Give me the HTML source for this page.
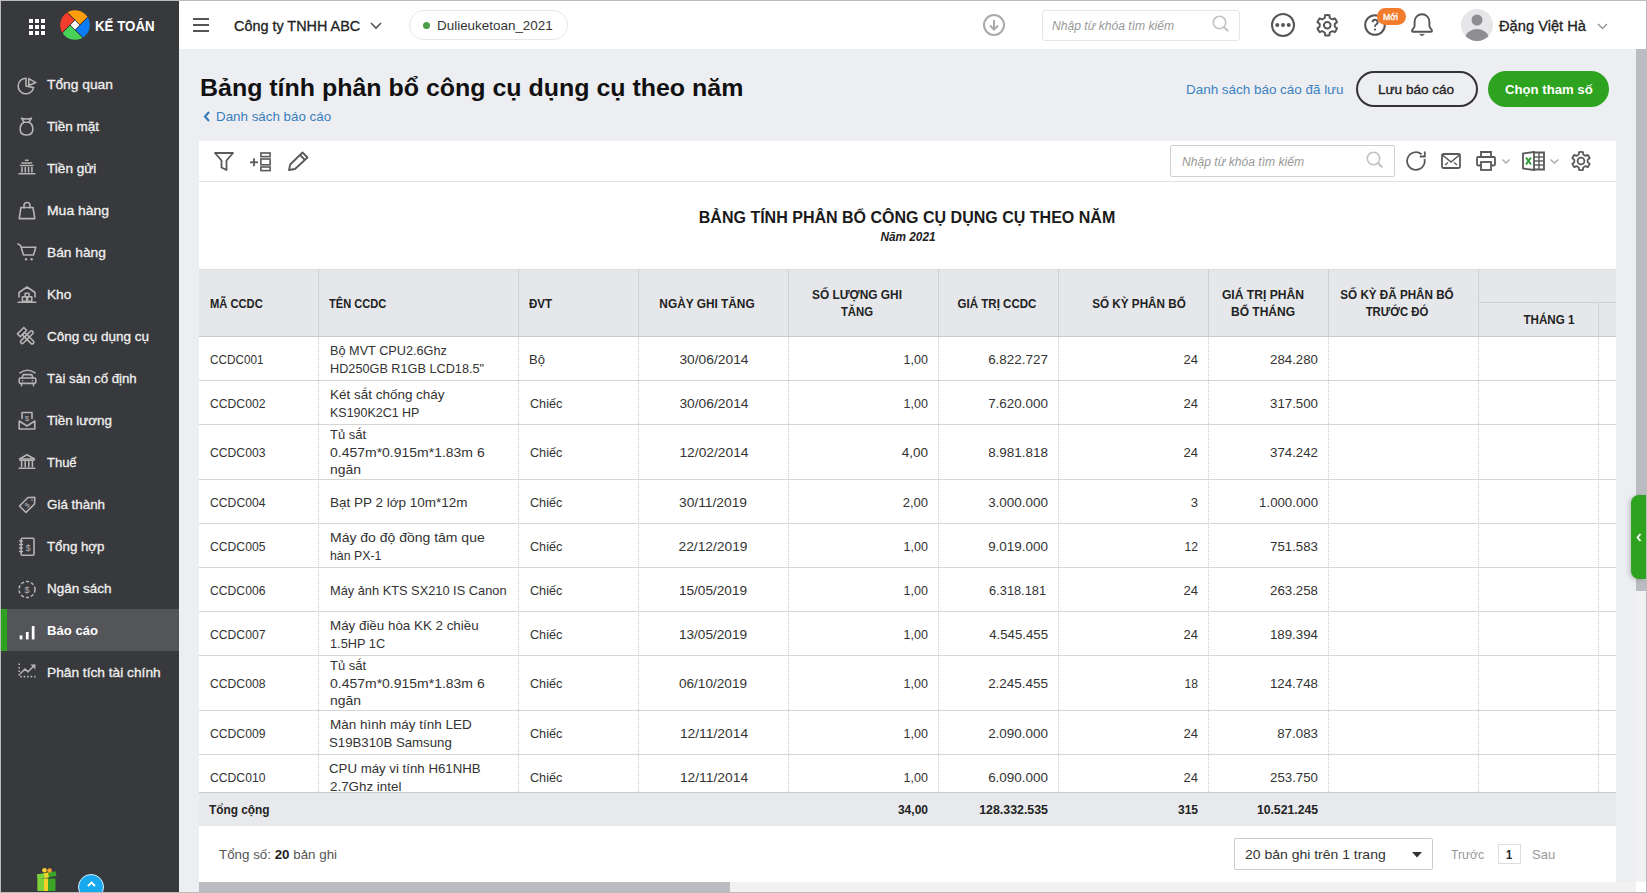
<!DOCTYPE html>
<html><head><meta charset="utf-8"><style>
*{box-sizing:border-box;margin:0;padding:0}
html,body{width:1647px;height:893px;overflow:hidden}
body{position:relative;background:#edeef1;font-family:"Liberation Sans",sans-serif;color:#222}
.a{position:absolute;white-space:nowrap;line-height:1}
.n{position:absolute}
svg{position:absolute;overflow:visible}
</style></head><body>
<div class="n" style="left:1px;top:1px;width:178px;height:891px;background:#38393c"></div>
<div class="n" style="left:29px;top:19px;width:4px;height:4px;background:#fff"></div>
<div class="n" style="left:35px;top:19px;width:4px;height:4px;background:#fff"></div>
<div class="n" style="left:41px;top:19px;width:4px;height:4px;background:#fff"></div>
<div class="n" style="left:29px;top:25px;width:4px;height:4px;background:#fff"></div>
<div class="n" style="left:35px;top:25px;width:4px;height:4px;background:#fff"></div>
<div class="n" style="left:41px;top:25px;width:4px;height:4px;background:#fff"></div>
<div class="n" style="left:29px;top:31px;width:4px;height:4px;background:#fff"></div>
<div class="n" style="left:35px;top:31px;width:4px;height:4px;background:#fff"></div>
<div class="n" style="left:41px;top:31px;width:4px;height:4px;background:#fff"></div>
<svg style="left:59.9px;top:10px" width="30" height="30" viewBox="0 0 30 30">
<defs><clipPath id="lc"><circle cx="15" cy="15" r="14.8"/></clipPath></defs>
<g clip-path="url(#lc)" stroke="#2e2f31" stroke-width="0.9">
<polygon points="-15.00,-19.90 15.00,10.10 19.90,15.00 49.90,-15.00" fill="#ff9d0b"/>
<polygon points="19.90,15.00 49.90,-15.00 45.00,49.90 15.00,19.90" fill="#0b7cf4"/>
<polygon points="15.00,19.90 45.00,49.90 -19.90,45.00 10.10,15.00" fill="#48d258"/>
<polygon points="10.10,15.00 -19.90,45.00 -15.00,-19.90 15.00,10.10" fill="#f23c2c"/>
</g>
<polygon points="15.00,10.10 19.90,15.00 15.00,19.90 10.10,15.00" fill="#fff" stroke="#2e2f31" stroke-width="0.8"/>
</svg>
<div class="a" id="t1" style="left:94.60px;top:19.15px;font-size:14.00px;color:#fff;font-weight:700;font-style:normal;transform:scaleX(0.9500);transform-origin:0 0;">KẾ TOÁN</div>
<div class="a" id="t2" style="left:47.00px;top:78.00px;font-size:13.00px;color:#efefef;font-weight:400;font-style:normal;-webkit-text-stroke:0.3px currentColor;transform:scaleX(1.0607);transform-origin:0 0;">Tổng quan</div>
<svg style="left:17px;top:74px" width="20" height="20"><path d="M9,12 L9,4.2 A7.8,7.8 0 1,0 16.6,13.6 Z" fill="none" stroke="#b4b4b4" stroke-width="1.6" stroke-linejoin="round" stroke-linecap="round"/><path d="M11.8,4.6 L11.8,11.6 L18.8,8.6 Z" fill="none" stroke="#b4b4b4" stroke-width="1.6" stroke-linejoin="round" stroke-linecap="round"/></svg>
<div class="a" id="t3" style="left:47.00px;top:120.00px;font-size:13.00px;color:#efefef;font-weight:400;font-style:normal;-webkit-text-stroke:0.3px currentColor;transform:scaleX(1.0377);transform-origin:0 0;">Tiền mặt</div>
<svg style="left:17px;top:116px" width="20" height="20"><path d="M4.5,2.2 C6.5,3.2 12.5,3.2 14.5,2.2 L12,6.2 L7,6.2 Z" fill="none" stroke="#b4b4b4" stroke-width="1.6" stroke-linejoin="round" stroke-linecap="round"/><path d="M7,6.2 C1.5,9.5 1.5,19 9.5,19 C17.5,19 17.5,9.5 12,6.2" fill="none" stroke="#b4b4b4" stroke-width="1.6" stroke-linejoin="round" stroke-linecap="round"/></svg>
<div class="a" id="t4" style="left:47.00px;top:162.00px;font-size:13.00px;color:#efefef;font-weight:400;font-style:normal;-webkit-text-stroke:0.3px currentColor;transform:scaleX(1.0455);transform-origin:0 0;">Tiền gửi</div>
<svg style="left:17px;top:158px" width="20" height="20"><path d="M8.5,2.2 H11" fill="none" stroke="#b4b4b4" stroke-width="1.6" stroke-linejoin="round" stroke-linecap="round"/><path d="M5,5 H14.5" fill="none" stroke="#b4b4b4" stroke-width="1.6" stroke-linejoin="round" stroke-linecap="round"/><path d="M3.5,7.5 H16" fill="none" stroke="#b4b4b4" stroke-width="1.6" stroke-linejoin="round" stroke-linecap="round"/><path d="M5,9.5 V14 M8.3,9.5 V14 M11.6,9.5 V14 M14.9,9.5 V14" fill="none" stroke="#b4b4b4" stroke-width="1.6" stroke-linejoin="round" stroke-linecap="round"/><path d="M2,15.8 H17.8" fill="none" stroke="#b4b4b4" stroke-width="1.6" stroke-linejoin="round" stroke-linecap="round"/></svg>
<div class="a" id="t5" style="left:47.00px;top:204.00px;font-size:13.00px;color:#efefef;font-weight:400;font-style:normal;-webkit-text-stroke:0.3px currentColor;transform:scaleX(1.0729);transform-origin:0 0;">Mua hàng</div>
<svg style="left:17px;top:200px" width="20" height="20"><path d="M7,8 V5.5 A3,3 0 0,1 13,5.5 V8" fill="none" stroke="#b4b4b4" stroke-width="1.6" stroke-linejoin="round" stroke-linecap="round"/><path d="M4,7.5 H16 L17.8,18.6 H2.2 Z" fill="none" stroke="#b4b4b4" stroke-width="1.6" stroke-linejoin="round" stroke-linecap="round"/></svg>
<div class="a" id="t6" style="left:47.00px;top:246.00px;font-size:13.00px;color:#efefef;font-weight:400;font-style:normal;-webkit-text-stroke:0.3px currentColor;transform:scaleX(1.0565);transform-origin:0 0;">Bán hàng</div>
<svg style="left:17px;top:242px" width="20" height="20"><path d="M1,1.8 L3.6,3.6 L6.5,13 H16.5 L18.8,5.2 H4.4" fill="none" stroke="#b4b4b4" stroke-width="1.6" stroke-linejoin="round" stroke-linecap="round"/><circle cx="9" cy="17.3" r="1.2" fill="#b4b4b4"/><circle cx="14.6" cy="17.3" r="1.2" fill="#b4b4b4"/></svg>
<div class="a" id="t7" style="left:47.00px;top:288.00px;font-size:13.00px;color:#efefef;font-weight:400;font-style:normal;-webkit-text-stroke:0.3px currentColor;transform:scaleX(1.0511);transform-origin:0 0;">Kho</div>
<svg style="left:17px;top:284px" width="20" height="20"><path d="M2,13 V8.5 L10,3 L18,8.5 V13" fill="none" stroke="#b4b4b4" stroke-width="1.6" stroke-linejoin="round" stroke-linecap="round"/><rect x="8.2" y="9.2" width="3.8" height="3.6" fill="none" stroke="#b4b4b4" stroke-width="1.6" stroke-linejoin="round" stroke-linecap="round"/><rect x="5.4" y="12.8" width="4.2" height="4.5" fill="none" stroke="#b4b4b4" stroke-width="1.6" stroke-linejoin="round" stroke-linecap="round"/><rect x="10.6" y="12.8" width="4.2" height="4.5" fill="none" stroke="#b4b4b4" stroke-width="1.6" stroke-linejoin="round" stroke-linecap="round"/><path d="M1.2,18.3 H18.8" fill="none" stroke="#b4b4b4" stroke-width="1.6" stroke-linejoin="round" stroke-linecap="round"/></svg>
<div class="a" id="t8" style="left:47.00px;top:330.00px;font-size:13.00px;color:#efefef;font-weight:400;font-style:normal;-webkit-text-stroke:0.3px currentColor;transform:scaleX(1.0390);transform-origin:0 0;">Công cụ dụng cụ</div>
<svg style="left:17px;top:326px" width="20" height="20"><g transform="rotate(-45 10 11)"><rect x="8.3" y="6" width="3.4" height="14" rx="1.7" fill="none" stroke="#b4b4b4" stroke-width="1.6" stroke-linejoin="round" stroke-linecap="round"/><path d="M5.5,2 H14.5 V6 H5.5 Z" fill="none" stroke="#b4b4b4" stroke-width="1.6" stroke-linejoin="round" stroke-linecap="round"/></g><g transform="rotate(45 10 11)"><rect x="8.3" y="3" width="3.4" height="16.5" rx="1.7" fill="none" stroke="#b4b4b4" stroke-width="1.6" stroke-linejoin="round" stroke-linecap="round"/></g></svg>
<div class="a" id="t9" style="left:47.00px;top:372.00px;font-size:13.00px;color:#efefef;font-weight:400;font-style:normal;-webkit-text-stroke:0.3px currentColor;transform:scaleX(1.0171);transform-origin:0 0;">Tài sản cố định</div>
<svg style="left:17px;top:368px" width="20" height="20"><path d="M3,4.8 Q10.5,-0.2 18,4.8" fill="none" stroke="#b4b4b4" stroke-width="1.6" stroke-linejoin="round" stroke-linecap="round"/><path d="M5,10 L6.3,6.6 H14.7 L16,10" fill="none" stroke="#b4b4b4" stroke-width="1.6" stroke-linejoin="round" stroke-linecap="round"/><rect x="2.2" y="10" width="16.6" height="5.4" rx="1.3" fill="none" stroke="#b4b4b4" stroke-width="1.6" stroke-linejoin="round" stroke-linecap="round"/><path d="M4.5,15.4 V17.8 M16.5,15.4 V17.8" fill="none" stroke="#b4b4b4" stroke-width="1.6" stroke-linejoin="round" stroke-linecap="round"/><circle cx="5.6" cy="12.7" r="0.8" fill="#b4b4b4"/><circle cx="15.4" cy="12.7" r="0.8" fill="#b4b4b4"/></svg>
<div class="a" id="t10" style="left:47.00px;top:414.00px;font-size:13.00px;color:#efefef;font-weight:400;font-style:normal;-webkit-text-stroke:0.3px currentColor;transform:scaleX(1.0312);transform-origin:0 0;">Tiền lương</div>
<svg style="left:17px;top:410px" width="20" height="20"><path d="M5,8.5 V2.5 H15 V8.5" fill="none" stroke="#b4b4b4" stroke-width="1.6" stroke-linejoin="round" stroke-linecap="round"/><path d="M2.2,11 L10,16 L17.8,11 V19 H2.2 Z" fill="none" stroke="#b4b4b4" stroke-width="1.6" stroke-linejoin="round" stroke-linecap="round"/><text x="10" y="10.5" font-size="8" text-anchor="middle" fill="#b4b4b4" font-family="Liberation Sans">$</text></svg>
<div class="a" id="t11" style="left:47.00px;top:456.00px;font-size:13.00px;color:#efefef;font-weight:400;font-style:normal;-webkit-text-stroke:0.3px currentColor;transform:scaleX(0.9972);transform-origin:0 0;">Thuế</div>
<svg style="left:17px;top:452px" width="20" height="20"><path d="M2.5,7 L10,2.8 L17.5,7 Z" fill="none" stroke="#b4b4b4" stroke-width="1.6" stroke-linejoin="round" stroke-linecap="round"/><path d="M3,8.3 H17" fill="none" stroke="#b4b4b4" stroke-width="1.6" stroke-linejoin="round" stroke-linecap="round"/><path d="M4.6,9.5 V14.6 M8.2,9.5 V14.6 M11.8,9.5 V14.6 M15.4,9.5 V14.6" fill="none" stroke="#b4b4b4" stroke-width="1.6" stroke-linejoin="round" stroke-linecap="round"/><path d="M2.2,16.3 H17.8" fill="none" stroke="#b4b4b4" stroke-width="1.6" stroke-linejoin="round" stroke-linecap="round"/></svg>
<div class="a" id="t12" style="left:47.00px;top:498.00px;font-size:13.00px;color:#efefef;font-weight:400;font-style:normal;-webkit-text-stroke:0.3px currentColor;transform:scaleX(1.0295);transform-origin:0 0;">Giá thành</div>
<svg style="left:17px;top:494px" width="20" height="20"><path d="M2.5,12 L11,3.5 L17.8,3.2 L17.5,10 L9,18.5 Z" fill="none" stroke="#b4b4b4" stroke-width="1.6" stroke-linejoin="round" stroke-linecap="round"/><circle cx="15" cy="6" r="0.8" fill="#b4b4b4"/><text x="10" y="13.6" font-size="7" text-anchor="middle" fill="#b4b4b4" font-family="Liberation Sans" transform="rotate(-45 10 11)">$</text></svg>
<div class="a" id="t13" style="left:47.00px;top:540.00px;font-size:13.00px;color:#efefef;font-weight:400;font-style:normal;-webkit-text-stroke:0.3px currentColor;transform:scaleX(1.0216);transform-origin:0 0;">Tổng hợp</div>
<svg style="left:17px;top:536px" width="20" height="20"><rect x="4.2" y="2.2" width="12.8" height="17" rx="1" fill="none" stroke="#b4b4b4" stroke-width="1.6" stroke-linejoin="round" stroke-linecap="round"/><path d="M2.6,5 H5.4 M2.6,8.5 H5.4 M2.6,12 H5.4 M2.6,15.5 H5.4" fill="none" stroke="#b4b4b4" stroke-width="1.6" stroke-linejoin="round" stroke-linecap="round"/><text x="11" y="14.5" font-size="8.5" text-anchor="middle" fill="#b4b4b4" font-family="Liberation Sans">$</text></svg>
<div class="a" id="t14" style="left:47.00px;top:582.00px;font-size:13.00px;color:#efefef;font-weight:400;font-style:normal;-webkit-text-stroke:0.3px currentColor;transform:scaleX(1.0374);transform-origin:0 0;">Ngân sách</div>
<svg style="left:17px;top:578px" width="20" height="20"><circle cx="10" cy="11.5" r="8" fill="none" stroke="#b4b4b4" stroke-width="1.5" stroke-dasharray="3.2 2"/><text x="10" y="14.8" font-size="9" text-anchor="middle" fill="#b4b4b4" font-family="Liberation Sans">$</text></svg>
<div class="n" style="left:1px;top:609px;width:178px;height:42px;background:#545558"></div>
<div class="n" style="left:1px;top:609px;width:6px;height:42px;background:#2ea31f"></div>
<div class="a" id="t15" style="left:47.00px;top:624.00px;font-size:13.00px;color:#fff;font-weight:700;font-style:normal;transform:scaleX(1.0082);transform-origin:0 0;">Báo cáo</div>
<svg style="left:17px;top:620px" width="20" height="20"><rect x="2.7" y="15.4" width="2.7" height="4" fill="#fff"/><rect x="8.9" y="12" width="2.7" height="7.4" fill="#fff"/><rect x="14.8" y="6" width="2.7" height="13.4" fill="#fff"/></svg>
<div class="a" id="t16" style="left:47.00px;top:666.00px;font-size:13.00px;color:#efefef;font-weight:400;font-style:normal;-webkit-text-stroke:0.3px currentColor;transform:scaleX(1.0556);transform-origin:0 0;">Phân tích tài chính</div>
<svg style="left:17px;top:662px" width="20" height="20"><path d="M2.2,1.5 V14.6 H18.6" fill="none" stroke="#b4b4b4" stroke-width="1.6" stroke-dasharray="1.6 1.9"/><path d="M3.5,11.5 L8,7 L11,9.8 L17.5,3.3" fill="none" stroke="#b4b4b4" stroke-width="1.6" stroke-linejoin="round" stroke-linecap="round" stroke-width="1.6"/><path d="M13.5,2.5 H18.4 V7.4 Z" fill="#b4b4b4"/></svg>
<svg style="left:36px;top:866px" width="24" height="26">
<path d="M1.5,12.5 H19.5 V25 H1.5 Z" fill="#3aa528"/>
<path d="M1.5,12.5 H8.5 V25 H1.5 Z" fill="#7ed13a"/>
<rect x="8" y="12.5" width="4" height="12.5" fill="#f4d22a"/>
<path d="M0.8,8.5 L19.5,5.2 L20.5,10 L1.8,13.2 Z" fill="#3aa528"/>
<path d="M0.8,8.5 L10,6.9 L11,11.6 L1.8,13.2 Z" fill="#7ed13a"/>
<path d="M8,7.2 L12,6.5 L13,11.2 L9,11.9 Z" fill="#f4d22a"/>
<circle cx="8.5" cy="4.2" r="2.3" fill="#f4d22a"/><circle cx="13.6" cy="4.6" r="2.3" fill="#f0a030"/>
</svg>
<div class="n" style="left:77.5px;top:874px;width:26px;height:26px;border-radius:50%;background:#17a8ee;border:1px solid #d8f0ff"></div>
<svg style="left:86.5px;top:881px" width="9" height="6"><polyline points="1,5 4.5,1.5 8,5" fill="none" stroke="#fff" stroke-width="1.8"/></svg>
<div class="n" style="left:179px;top:1px;width:1467px;height:48px;background:#fff"></div>
<div class="n" style="left:193px;top:18px;width:16px;height:2px;background:#555"></div>
<div class="n" style="left:193px;top:24px;width:16px;height:2px;background:#555"></div>
<div class="n" style="left:193px;top:30px;width:16px;height:2px;background:#555"></div>
<div class="a" id="t17" style="left:233.60px;top:19.15px;font-size:14.00px;color:#222;font-weight:400;font-style:normal;-webkit-text-stroke:0.3px currentColor;transform:scaleX(1.0283);transform-origin:0 0;">Công ty TNHH ABC</div>
<svg style="left:370px;top:22px" width="12" height="8"><polyline points="1,1 6,6 11,1" fill="none" stroke="#555" stroke-width="1.6"/></svg>
<div class="n" style="left:409px;top:10px;width:159px;height:30px;border:1px solid #e6e6e6;border-radius:15px;background:#fff"></div>
<div class="n" style="left:423px;top:22px;width:7px;height:7px;border-radius:50%;background:#4a9e4a"></div>
<div class="a" id="t18" style="left:437.20px;top:20.25px;font-size:12.70px;color:#333;font-weight:400;font-style:normal;transform:scaleX(1.0586);transform-origin:0 0;">Dulieuketoan_2021</div>
<svg style="left:983px;top:14px" width="22" height="22"><circle cx="11" cy="11" r="10" fill="none" stroke="#aaa" stroke-width="2"/><line x1="11" y1="6" x2="11" y2="15" stroke="#aaa" stroke-width="2"/><polyline points="7,11.5 11,15.5 15,11.5" fill="none" stroke="#aaa" stroke-width="2"/></svg>
<div class="n" style="left:1042px;top:10px;width:198px;height:31px;border:1px solid #e6e6e6;border-radius:3px"></div>
<div class="a" id="t19" style="left:1052.00px;top:19.84px;font-size:12.00px;color:#999;font-weight:400;font-style:italic;transform:scaleX(1.0091);transform-origin:0 0;">Nhập từ khóa tìm kiếm</div>
<svg style="left:1212px;top:15px" width="18" height="18"><circle cx="7.5" cy="7.5" r="6.2" fill="none" stroke="#c2c2c2" stroke-width="1.6"/><line x1="12.2" y1="12.2" x2="16.2" y2="16.2" stroke="#c2c2c2" stroke-width="2"/></svg>
<svg style="left:1271px;top:13px" width="24" height="24"><circle cx="12" cy="12" r="11" fill="none" stroke="#555" stroke-width="2"/><circle cx="6.3" cy="12" r="2" fill="#555"/><circle cx="12" cy="12" r="2" fill="#555"/><circle cx="17.7" cy="12" r="2" fill="#555"/></svg>
<svg style="left:1316px;top:13.5px" width="22.5" height="22.5"><path d="M8.77,3.87 L9.01,1.25 A10.25,10.25 0 0,1 13.49,1.25 L13.73,3.87 A7.01,7.01 0 0,0 16.40,5.41 L18.79,4.31 A10.25,10.25 0 0,1 21.03,8.18 L18.89,9.71 A7.01,7.01 0 0,0 18.89,12.79 L21.03,14.32 A10.25,10.25 0 0,1 18.79,18.19 L16.40,17.09 A7.01,7.01 0 0,0 13.73,18.63 L13.49,21.25 A10.25,10.25 0 0,1 9.01,21.25 L8.77,18.63 A7.01,7.01 0 0,0 6.10,17.09 L3.71,18.19 A10.25,10.25 0 0,1 1.47,14.32 L3.61,12.79 A7.01,7.01 0 0,0 3.61,9.71 L1.47,8.18 A10.25,10.25 0 0,1 3.71,4.31 L6.10,5.41 A7.01,7.01 0 0,0 8.77,3.87 Z" fill="none" stroke="#555" stroke-width="2" stroke-linejoin="round"/><circle cx="11.25" cy="11.25" r="3.3" fill="none" stroke="#555" stroke-width="2"/></svg>
<svg style="left:1364px;top:14px" width="22" height="22"><circle cx="11" cy="11" r="9.8" fill="none" stroke="#555" stroke-width="2"/><path d="M8.6,8.2 a2.5,2.5 0 1,1 3.6,2.3 c-0.9,0.5 -1.2,1 -1.2,2.2" fill="none" stroke="#555" stroke-width="1.9"/><circle cx="11" cy="15.6" r="1.1" fill="#555"/></svg>
<div class="n" style="left:1376.5px;top:8.3px;width:29.5px;height:16.7px;border-radius:8.4px;background:#f27b2c"></div>
<div class="a" id="t20" style="left:1383.00px;top:12.60px;font-size:8.50px;color:#fff;font-weight:400;font-style:normal;-webkit-text-stroke:0.3px currentColor;transform:scaleX(1.0369);transform-origin:0 0;">Mới</div>
<svg style="left:1411px;top:13px" width="22" height="24"><path d="M3.6,8.6 A7.4,7.4 0 0,1 18.4,8.6 V12.8 C18.4,15.4 21,16 21,17.7 C21,18.4 20.6,18.8 20,18.8 H2 C1.4,18.8 1,18.4 1,17.7 C1,16 3.6,15.4 3.6,12.8 Z" fill="none" stroke="#555" stroke-width="1.9" stroke-linejoin="round"/><path d="M8.6,21.3 H13.4 L11,22.9 Z" fill="#555" stroke="#555" stroke-width="0.6"/></svg>
<svg style="left:1461px;top:9px" width="32" height="32"><defs><clipPath id="av"><circle cx="16" cy="16" r="16"/></clipPath></defs><circle cx="16" cy="16" r="16" fill="#e6e6e8"/><g clip-path="url(#av)"><circle cx="16" cy="11" r="5.5" fill="#8e8e92"/><ellipse cx="16" cy="30" rx="12" ry="10" fill="#8e8e92"/></g></svg>
<div class="a" id="t21" style="left:1499.20px;top:19.05px;font-size:14.00px;color:#222;font-weight:400;font-style:normal;-webkit-text-stroke:0.3px currentColor;transform:scaleX(1.0478);transform-origin:0 0;">Đặng Việt Hà</div>
<svg style="left:1597px;top:23px" width="11" height="7"><polyline points="1,1 5.5,5.5 10,1" fill="none" stroke="#888" stroke-width="1.2"/></svg>
<div class="n" style="left:1636px;top:49px;width:10px;height:833px;background:#f1f1f1"></div>
<div class="n" style="left:1636px;top:49px;width:10px;height:542px;background:#babcc1"></div>
<div class="n" style="left:199px;top:882px;width:1437px;height:10px;background:#f1f1f1"></div>
<div class="n" style="left:199px;top:882px;width:531px;height:10px;background:#babcc1"></div>
<div class="n" style="left:1636px;top:882px;width:10px;height:10px;background:#fff"></div>
<div class="n" style="left:1631px;top:495px;width:15px;height:84px;background:#2ea31f;border-radius:8px 0 0 8px;box-shadow:-2px 1px 4px rgba(0,0,0,.18)"></div>
<svg style="left:1636px;top:533px" width="6" height="9"><polyline points="4.5,1 1.5,4.5 4.5,8" fill="none" stroke="#fff" stroke-width="1.8"/></svg>
<div class="a" id="t22" style="left:200.36px;top:76.28px;font-size:24.00px;color:#111;font-weight:700;font-style:normal;transform:scaleX(1.0396);transform-origin:0 0;">Bảng tính phân bổ công cụ dụng cụ theo năm</div>
<svg style="left:203px;top:111px" width="8" height="11"><polyline points="6,1 2,5.5 6,10" fill="none" stroke="#2f78b8" stroke-width="2"/></svg>
<div class="a" id="t23" style="left:215.97px;top:110.00px;font-size:13.00px;color:#3a7fbd;font-weight:400;font-style:normal;transform:scaleX(1.0273);transform-origin:0 0;">Danh sách báo cáo</div>
<div class="a" id="t24" style="left:1185.97px;top:83.00px;font-size:13.00px;color:#3a82c0;font-weight:400;font-style:normal;transform:scaleX(1.0331);transform-origin:0 0;">Danh sách báo cáo đã lưu</div>
<div class="n" style="left:1356px;top:71px;width:121.5px;height:36px;border:2px solid #333;border-radius:18px"></div>
<div class="a" id="t25" style="left:1377.96px;top:83.00px;font-size:13.00px;color:#222;font-weight:400;font-style:normal;-webkit-text-stroke:0.3px currentColor;transform:scaleX(1.0421);transform-origin:0 0;">Lưu báo cáo</div>
<div class="n" style="left:1488px;top:71px;width:121px;height:36px;border-radius:18px;background:#2ea31f"></div>
<div class="a" id="t26" style="left:1505.00px;top:83.00px;font-size:13.00px;color:#fff;font-weight:700;font-style:normal;transform:scaleX(1.0118);transform-origin:0 0;">Chọn tham số</div>
<div class="n" style="left:199px;top:141px;width:1417px;height:685px;background:#fff"></div>
<div class="n" style="left:199px;top:181px;width:1417px;height:1px;background:#e2e2e2"></div>
<svg style="left:214px;top:152px" width="20" height="19"><path d="M1,1 H19 L12.5,8.5 V18 L7.5,15.5 V8.5 Z" fill="none" stroke="#595959" stroke-width="1.8" stroke-linejoin="round"/></svg>
<svg style="left:250px;top:152px" width="22" height="19"><line x1="0" y1="10.3" x2="8" y2="10.3" stroke="#595959" stroke-width="1.8"/><line x1="4" y1="6.3" x2="4" y2="14.3" stroke="#595959" stroke-width="1.8"/><rect x="10.9" y="1" width="9.2" height="3.6" fill="none" stroke="#595959" stroke-width="1.6"/><rect x="10.9" y="7" width="9.2" height="5.8" fill="none" stroke="#595959" stroke-width="1.6"/><rect x="10.9" y="15" width="9.2" height="3.6" fill="none" stroke="#595959" stroke-width="1.6"/></svg>
<svg style="left:288px;top:151px" width="21" height="20"><path d="M1,19 L2.2,13.5 L14.5,1.5 L19.5,6.5 L7,18 Z M12,4 L17,9" fill="none" stroke="#595959" stroke-width="1.8" stroke-linejoin="round"/></svg>
<div class="n" style="left:1170px;top:145px;width:225px;height:32px;border:1px solid #cfcfcf;border-radius:2px"></div>
<div class="a" id="t27" style="left:1182.00px;top:155.84px;font-size:12.00px;color:#999;font-weight:400;font-style:italic;transform:scaleX(1.0091);transform-origin:0 0;">Nhập từ khóa tìm kiếm</div>
<svg style="left:1366px;top:151px" width="18" height="18"><circle cx="7.5" cy="7.5" r="6.2" fill="none" stroke="#c2c2c2" stroke-width="1.6"/><line x1="12.2" y1="12.2" x2="16.2" y2="16.2" stroke="#c2c2c2" stroke-width="2"/></svg>
<svg style="left:1406px;top:151px" width="21" height="20"><path d="M18.5,8 A8.8,8.8 0 1,1 15.5,3.2" fill="none" stroke="#595959" stroke-width="1.8"/><polyline points="18.8,0.5 18.8,5.5 13.8,5.5" fill="none" stroke="#595959" stroke-width="1.8"/></svg>
<svg style="left:1441px;top:153px" width="20" height="16"><rect x="1" y="1" width="18" height="14" rx="1.5" fill="none" stroke="#595959" stroke-width="1.8"/><polyline points="1.5,2 10,9 18.5,2" fill="none" stroke="#595959" stroke-width="1.6"/><line x1="4" y1="12" x2="7" y2="9.5" stroke="#595959" stroke-width="1.4"/><line x1="16" y1="12" x2="13" y2="9.5" stroke="#595959" stroke-width="1.4"/></svg>
<svg style="left:1476px;top:151px" width="20" height="20"><path d="M5,5.5 V1 H15 V5.5" fill="none" stroke="#595959" stroke-width="1.8"/><path d="M5,14.5 H2.2 Q1,14.5 1,13.3 V7.2 Q1,6 2.2,6 H17.8 Q19,6 19,7.2 V13.3 Q19,14.5 17.8,14.5 H15" fill="none" stroke="#595959" stroke-width="1.8"/><rect x="5" y="11" width="10" height="8" fill="none" stroke="#595959" stroke-width="1.8"/></svg>
<svg style="left:1502px;top:159px" width="8" height="5"><polyline points="0.5,0.5 4,4 7.5,0.5" fill="none" stroke="#aaa" stroke-width="1.4"/></svg>
<svg style="left:1522px;top:151px" width="23" height="20"><path d="M1,2.5 L12,1 V19 L1,17.5 Z" fill="none" stroke="#595959" stroke-width="1.8" stroke-linejoin="round"/><path d="M12,1.5 H22 V18.5 H12" fill="none" stroke="#595959" stroke-width="1.8"/><line x1="17" y1="1.5" x2="17" y2="18.5" stroke="#595959" stroke-width="1.4"/><line x1="12" y1="6" x2="22" y2="6" stroke="#595959" stroke-width="1.4"/><line x1="12" y1="10" x2="22" y2="10" stroke="#595959" stroke-width="1.4"/><line x1="12" y1="14" x2="22" y2="14" stroke="#595959" stroke-width="1.4"/><path d="M4,6.5 L9,13.5 M9,6.5 L4,13.5" stroke="#2e9b3a" stroke-width="2"/></svg>
<svg style="left:1550px;top:159px" width="9" height="5"><polyline points="0.5,0.5 4.5,4 8.5,0.5" fill="none" stroke="#aaa" stroke-width="1.4"/></svg>
<svg style="left:1571px;top:151px" width="20" height="20"><path d="M7.79,3.45 L8.01,1.12 A9.10,9.10 0 0,1 11.99,1.12 L12.21,3.45 A6.22,6.22 0 0,0 14.57,4.81 L16.70,3.84 A9.10,9.10 0 0,1 18.68,7.28 L16.78,8.63 A6.22,6.22 0 0,0 16.78,11.37 L18.68,12.72 A9.10,9.10 0 0,1 16.70,16.16 L14.57,15.19 A6.22,6.22 0 0,0 12.21,16.55 L11.99,18.88 A9.10,9.10 0 0,1 8.01,18.88 L7.79,16.55 A6.22,6.22 0 0,0 5.43,15.19 L3.30,16.16 A9.10,9.10 0 0,1 1.32,12.72 L3.22,11.37 A6.22,6.22 0 0,0 3.22,8.63 L1.32,7.28 A9.10,9.10 0 0,1 3.30,3.84 L5.43,4.81 A6.22,6.22 0 0,0 7.79,3.45 Z" fill="none" stroke="#595959" stroke-width="1.8" stroke-linejoin="round"/><circle cx="10.0" cy="10.0" r="3.4000000000000004" fill="none" stroke="#595959" stroke-width="1.8"/></svg>
<div class="a" id="t28" style="left:607.48px;width:600px;text-align:center;top:210.46px;font-size:16.00px;color:#1a1a1a;font-weight:700;font-style:normal;transform:scaleX(1.0011);transform-origin:50% 0;">BẢNG TÍNH PHÂN BỔ CÔNG CỤ DỤNG CỤ THEO NĂM</div>
<div class="a" id="t29" style="left:807.97px;width:200px;text-align:center;top:230.84px;font-size:12.00px;color:#222;font-weight:700;font-style:italic;transform:scaleX(0.9841);transform-origin:50% 0;">Năm 2021</div>
<div class="n" style="left:199px;top:269px;width:1417px;height:68px;background:#e5e7ea;border-top:1px solid #dcdde0;border-bottom:1px solid #c9cacc"></div>
<div class="n" style="left:318px;top:269px;width:1px;height:68px;background:#cfd0d3"></div>
<div class="n" style="left:518px;top:269px;width:1px;height:68px;background:#cfd0d3"></div>
<div class="n" style="left:638px;top:269px;width:1px;height:68px;background:#cfd0d3"></div>
<div class="n" style="left:788px;top:269px;width:1px;height:68px;background:#cfd0d3"></div>
<div class="n" style="left:938px;top:269px;width:1px;height:68px;background:#cfd0d3"></div>
<div class="n" style="left:1058px;top:269px;width:1px;height:68px;background:#cfd0d3"></div>
<div class="n" style="left:1208px;top:269px;width:1px;height:68px;background:#cfd0d3"></div>
<div class="n" style="left:1328px;top:269px;width:1px;height:68px;background:#cfd0d3"></div>
<div class="n" style="left:1478px;top:269px;width:1px;height:68px;background:#cfd0d3"></div>
<div class="n" style="left:1598px;top:302px;width:1px;height:35px;background:#cfd0d3"></div>
<div class="n" style="left:1478px;top:302px;width:138px;height:1px;background:#cfd0d3"></div>
<div class="a" id="t30" style="left:210.07px;top:297.84px;font-size:12.00px;color:#222;font-weight:700;font-style:normal;transform:scaleX(0.9308);transform-origin:0 0;">MÃ CCDC</div>
<div class="a" id="t31" style="left:329.00px;top:297.84px;font-size:12.00px;color:#222;font-weight:700;font-style:normal;transform:scaleX(0.9230);transform-origin:0 0;">TÊN CCDC</div>
<div class="a" id="t32" style="left:529.00px;top:297.84px;font-size:12.00px;color:#222;font-weight:700;font-style:normal;transform:scaleX(0.9618);transform-origin:0 0;">ĐVT</div>
<div class="a" id="t33" style="left:637.14px;width:140px;text-align:center;top:297.84px;font-size:12.00px;color:#222;font-weight:700;font-style:normal;transform:scaleX(0.9875);transform-origin:50% 0;">NGÀY GHI TĂNG</div>
<div class="a" id="t34" style="left:787.37px;width:140px;text-align:center;top:288.84px;font-size:12.00px;color:#222;font-weight:700;font-style:normal;transform:scaleX(0.9902);transform-origin:50% 0;">SỐ LƯỢNG GHI</div>
<div class="a" id="t35" style="left:786.68px;width:140px;text-align:center;top:305.84px;font-size:12.00px;color:#222;font-weight:700;font-style:normal;transform:scaleX(0.9438);transform-origin:50% 0;">TĂNG</div>
<div class="a" id="t36" style="left:939.16px;width:116px;text-align:center;top:297.84px;font-size:12.00px;color:#222;font-weight:700;font-style:normal;transform:scaleX(0.9605);transform-origin:50% 0;">GIÁ TRỊ CCDC</div>
<div class="a" id="t37" style="left:1069.03px;width:140px;text-align:center;top:297.84px;font-size:12.00px;color:#222;font-weight:700;font-style:normal;transform:scaleX(0.9738);transform-origin:50% 0;">SỐ KỲ PHÂN BỔ</div>
<div class="a" id="t38" style="left:1204.71px;width:116px;text-align:center;top:288.84px;font-size:12.00px;color:#222;font-weight:700;font-style:normal;transform:scaleX(1.0100);transform-origin:50% 0;">GIÁ TRỊ PHÂN</div>
<div class="a" id="t39" style="left:1204.67px;width:116px;text-align:center;top:305.84px;font-size:12.00px;color:#222;font-weight:700;font-style:normal;transform:scaleX(1.0006);transform-origin:50% 0;">BỔ THÁNG</div>
<div class="a" id="t40" style="left:1326.70px;width:140px;text-align:center;top:288.84px;font-size:12.00px;color:#222;font-weight:700;font-style:normal;transform:scaleX(0.9712);transform-origin:50% 0;">SỐ KỲ ĐÃ PHÂN BỔ</div>
<div class="a" id="t41" style="left:1327.46px;width:140px;text-align:center;top:305.84px;font-size:12.00px;color:#222;font-weight:700;font-style:normal;transform:scaleX(0.9461);transform-origin:50% 0;">TRƯỚC ĐÓ</div>
<div class="a" id="t42" style="left:1499.46px;width:100px;text-align:center;top:313.84px;font-size:12.00px;color:#222;font-weight:700;font-style:normal;transform:scaleX(0.9688);transform-origin:50% 0;">THÁNG 1</div>
<div class="a" id="t43" style="left:210.00px;top:352.90px;font-size:13.00px;color:#333;font-weight:400;font-style:normal;transform:scaleX(0.9030);transform-origin:0 0;">CCDC001</div>
<div class="a" id="t44" style="left:529.00px;top:352.90px;font-size:13.00px;color:#333;font-weight:400;font-style:normal;">Bộ</div>
<div class="a" id="t45" style="left:643.99px;width:140px;text-align:center;top:352.90px;font-size:13.00px;color:#333;font-weight:400;font-style:normal;transform:scaleX(1.0623);transform-origin:50% 0;">30/06/2014</div>
<div class="a" id="t46" style="left:828.00px;width:100px;text-align:right;top:352.90px;font-size:13.00px;color:#333;font-weight:400;font-style:normal;transform:scaleX(0.9632);transform-origin:100% 0;">1,00</div>
<div class="a" id="t47" style="left:948.00px;width:100px;text-align:right;top:352.90px;font-size:13.00px;color:#333;font-weight:400;font-style:normal;transform:scaleX(1.0351);transform-origin:100% 0;">6.822.727</div>
<div class="a" id="t48" style="left:1098.00px;width:100px;text-align:right;top:352.90px;font-size:13.00px;color:#333;font-weight:400;font-style:normal;transform:scaleX(1.0051);transform-origin:100% 0;">24</div>
<div class="a" id="t49" style="left:1218.00px;width:100px;text-align:right;top:352.90px;font-size:13.00px;color:#333;font-weight:400;font-style:normal;transform:scaleX(1.0213);transform-origin:100% 0;">284.280</div>
<div class="a" id="t50" style="left:330.02px;top:344.40px;font-size:13.00px;color:#333;font-weight:400;font-style:normal;transform:scaleX(0.9764);transform-origin:0 0;">Bộ MVT CPU2.6Ghz</div>
<div class="a" id="t51" style="left:330.03px;top:362.20px;font-size:13.00px;color:#333;font-weight:400;font-style:normal;transform:scaleX(0.9763);transform-origin:0 0;">HD250GB R1GB LCD18.5&quot;</div>
<div class="n" style="left:199px;top:380px;width:1417px;height:1px;background:#d6d6d6"></div>
<div class="a" id="t52" style="left:210.00px;top:396.90px;font-size:13.00px;color:#333;font-weight:400;font-style:normal;transform:scaleX(0.9356);transform-origin:0 0;">CCDC002</div>
<div class="a" id="t53" style="left:530.00px;top:396.90px;font-size:13.00px;color:#333;font-weight:400;font-style:normal;transform:scaleX(0.9716);transform-origin:0 0;">Chiếc</div>
<div class="a" id="t54" style="left:643.99px;width:140px;text-align:center;top:396.90px;font-size:13.00px;color:#333;font-weight:400;font-style:normal;transform:scaleX(1.0623);transform-origin:50% 0;">30/06/2014</div>
<div class="a" id="t55" style="left:828.00px;width:100px;text-align:right;top:396.90px;font-size:13.00px;color:#333;font-weight:400;font-style:normal;transform:scaleX(0.9632);transform-origin:100% 0;">1,00</div>
<div class="a" id="t56" style="left:948.00px;width:100px;text-align:right;top:396.90px;font-size:13.00px;color:#333;font-weight:400;font-style:normal;transform:scaleX(1.0351);transform-origin:100% 0;">7.620.000</div>
<div class="a" id="t57" style="left:1098.00px;width:100px;text-align:right;top:396.90px;font-size:13.00px;color:#333;font-weight:400;font-style:normal;transform:scaleX(1.0051);transform-origin:100% 0;">24</div>
<div class="a" id="t58" style="left:1218.00px;width:100px;text-align:right;top:396.90px;font-size:13.00px;color:#333;font-weight:400;font-style:normal;transform:scaleX(1.0213);transform-origin:100% 0;">317.500</div>
<div class="a" id="t59" style="left:329.96px;top:388.40px;font-size:13.00px;color:#333;font-weight:400;font-style:normal;transform:scaleX(1.0361);transform-origin:0 0;">Két sắt chống cháy</div>
<div class="a" id="t60" style="left:330.03px;top:406.20px;font-size:13.00px;color:#333;font-weight:400;font-style:normal;transform:scaleX(0.9590);transform-origin:0 0;">KS190K2C1 HP</div>
<div class="n" style="left:199px;top:424px;width:1417px;height:1px;background:#d6d6d6"></div>
<div class="a" id="t61" style="left:210.00px;top:446.40px;font-size:13.00px;color:#333;font-weight:400;font-style:normal;transform:scaleX(0.9356);transform-origin:0 0;">CCDC003</div>
<div class="a" id="t62" style="left:530.00px;top:446.40px;font-size:13.00px;color:#333;font-weight:400;font-style:normal;transform:scaleX(0.9716);transform-origin:0 0;">Chiếc</div>
<div class="a" id="t63" style="left:643.97px;width:140px;text-align:center;top:446.40px;font-size:13.00px;color:#333;font-weight:400;font-style:normal;transform:scaleX(1.0617);transform-origin:50% 0;">12/02/2014</div>
<div class="a" id="t64" style="left:828.00px;width:100px;text-align:right;top:446.40px;font-size:13.00px;color:#333;font-weight:400;font-style:normal;transform:scaleX(1.0400);transform-origin:100% 0;">4,00</div>
<div class="a" id="t65" style="left:948.00px;width:100px;text-align:right;top:446.40px;font-size:13.00px;color:#333;font-weight:400;font-style:normal;transform:scaleX(1.0351);transform-origin:100% 0;">8.981.818</div>
<div class="a" id="t66" style="left:1098.00px;width:100px;text-align:right;top:446.40px;font-size:13.00px;color:#333;font-weight:400;font-style:normal;transform:scaleX(1.0051);transform-origin:100% 0;">24</div>
<div class="a" id="t67" style="left:1218.00px;width:100px;text-align:right;top:446.40px;font-size:13.00px;color:#333;font-weight:400;font-style:normal;transform:scaleX(1.0213);transform-origin:100% 0;">374.242</div>
<div class="a" id="t68" style="left:330.00px;top:427.50px;font-size:13.00px;color:#333;font-weight:400;font-style:normal;transform:scaleX(1.0024);transform-origin:0 0;">Tủ sắt</div>
<div class="a" id="t69" style="left:330.00px;top:445.90px;font-size:13.00px;color:#333;font-weight:400;font-style:normal;transform:scaleX(1.0754);transform-origin:0 0;">0.457m*0.915m*1.83m 6</div>
<div class="a" id="t70" style="left:329.94px;top:463.10px;font-size:13.00px;color:#333;font-weight:400;font-style:normal;transform:scaleX(1.0702);transform-origin:0 0;">ngăn</div>
<div class="n" style="left:199px;top:479px;width:1417px;height:1px;background:#d6d6d6"></div>
<div class="a" id="t71" style="left:210.00px;top:495.90px;font-size:13.00px;color:#333;font-weight:400;font-style:normal;transform:scaleX(0.9368);transform-origin:0 0;">CCDC004</div>
<div class="a" id="t72" style="left:530.00px;top:495.90px;font-size:13.00px;color:#333;font-weight:400;font-style:normal;transform:scaleX(0.9716);transform-origin:0 0;">Chiếc</div>
<div class="a" id="t73" style="left:643.00px;width:140px;text-align:center;top:495.90px;font-size:13.00px;color:#333;font-weight:400;font-style:normal;transform:scaleX(1.0615);transform-origin:50% 0;">30/11/2019</div>
<div class="a" id="t74" style="left:828.00px;width:100px;text-align:right;top:495.90px;font-size:13.00px;color:#333;font-weight:400;font-style:normal;transform:scaleX(1.0016);transform-origin:100% 0;">2,00</div>
<div class="a" id="t75" style="left:948.00px;width:100px;text-align:right;top:495.90px;font-size:13.00px;color:#333;font-weight:400;font-style:normal;transform:scaleX(1.0351);transform-origin:100% 0;">3.000.000</div>
<div class="a" id="t76" style="left:1098.00px;width:100px;text-align:right;top:495.90px;font-size:13.00px;color:#333;font-weight:400;font-style:normal;">3</div>
<div class="a" id="t77" style="left:1218.00px;width:100px;text-align:right;top:495.90px;font-size:13.00px;color:#333;font-weight:400;font-style:normal;transform:scaleX(1.0182);transform-origin:100% 0;">1.000.000</div>
<div class="a" id="t78" style="left:329.96px;top:495.90px;font-size:13.00px;color:#333;font-weight:400;font-style:normal;transform:scaleX(1.0379);transform-origin:0 0;">Bạt PP 2 lớp 10m*12m</div>
<div class="n" style="left:199px;top:523px;width:1417px;height:1px;background:#d6d6d6"></div>
<div class="a" id="t79" style="left:210.00px;top:539.90px;font-size:13.00px;color:#333;font-weight:400;font-style:normal;transform:scaleX(0.9356);transform-origin:0 0;">CCDC005</div>
<div class="a" id="t80" style="left:530.00px;top:539.90px;font-size:13.00px;color:#333;font-weight:400;font-style:normal;transform:scaleX(0.9716);transform-origin:0 0;">Chiếc</div>
<div class="a" id="t81" style="left:643.00px;width:140px;text-align:center;top:539.90px;font-size:13.00px;color:#333;font-weight:400;font-style:normal;transform:scaleX(1.0615);transform-origin:50% 0;">22/12/2019</div>
<div class="a" id="t82" style="left:828.00px;width:100px;text-align:right;top:539.90px;font-size:13.00px;color:#333;font-weight:400;font-style:normal;transform:scaleX(0.9632);transform-origin:100% 0;">1,00</div>
<div class="a" id="t83" style="left:948.00px;width:100px;text-align:right;top:539.90px;font-size:13.00px;color:#333;font-weight:400;font-style:normal;transform:scaleX(1.0351);transform-origin:100% 0;">9.019.000</div>
<div class="a" id="t84" style="left:1098.00px;width:100px;text-align:right;top:539.90px;font-size:13.00px;color:#333;font-weight:400;font-style:normal;transform:scaleX(0.9286);transform-origin:100% 0;">12</div>
<div class="a" id="t85" style="left:1218.00px;width:100px;text-align:right;top:539.90px;font-size:13.00px;color:#333;font-weight:400;font-style:normal;transform:scaleX(1.0213);transform-origin:100% 0;">751.583</div>
<div class="a" id="t86" style="left:329.93px;top:531.40px;font-size:13.00px;color:#333;font-weight:400;font-style:normal;transform:scaleX(1.0757);transform-origin:0 0;">Máy đo độ đồng tâm que</div>
<div class="a" id="t87" style="left:330.05px;top:549.20px;font-size:13.00px;color:#333;font-weight:400;font-style:normal;transform:scaleX(0.9470);transform-origin:0 0;">hàn PX-1</div>
<div class="n" style="left:199px;top:567px;width:1417px;height:1px;background:#d6d6d6"></div>
<div class="a" id="t88" style="left:210.00px;top:583.90px;font-size:13.00px;color:#333;font-weight:400;font-style:normal;transform:scaleX(0.9356);transform-origin:0 0;">CCDC006</div>
<div class="a" id="t89" style="left:530.00px;top:583.90px;font-size:13.00px;color:#333;font-weight:400;font-style:normal;transform:scaleX(0.9716);transform-origin:0 0;">Chiếc</div>
<div class="a" id="t90" style="left:642.50px;width:140px;text-align:center;top:583.90px;font-size:13.00px;color:#333;font-weight:400;font-style:normal;transform:scaleX(1.0484);transform-origin:50% 0;">15/05/2019</div>
<div class="a" id="t91" style="left:828.00px;width:100px;text-align:right;top:583.90px;font-size:13.00px;color:#333;font-weight:400;font-style:normal;transform:scaleX(0.9632);transform-origin:100% 0;">1,00</div>
<div class="a" id="t92" style="left:946.00px;width:100px;text-align:right;top:583.90px;font-size:13.00px;color:#333;font-weight:400;font-style:normal;transform:scaleX(0.9834);transform-origin:100% 0;">6.318.181</div>
<div class="a" id="t93" style="left:1098.00px;width:100px;text-align:right;top:583.90px;font-size:13.00px;color:#333;font-weight:400;font-style:normal;transform:scaleX(1.0051);transform-origin:100% 0;">24</div>
<div class="a" id="t94" style="left:1218.00px;width:100px;text-align:right;top:583.90px;font-size:13.00px;color:#333;font-weight:400;font-style:normal;transform:scaleX(1.0213);transform-origin:100% 0;">263.258</div>
<div class="a" id="t95" style="left:330.01px;top:583.90px;font-size:13.00px;color:#333;font-weight:400;font-style:normal;transform:scaleX(0.9849);transform-origin:0 0;">Máy ảnh KTS SX210 IS Canon</div>
<div class="n" style="left:199px;top:611px;width:1417px;height:1px;background:#d6d6d6"></div>
<div class="a" id="t96" style="left:210.00px;top:627.90px;font-size:13.00px;color:#333;font-weight:400;font-style:normal;transform:scaleX(0.9356);transform-origin:0 0;">CCDC007</div>
<div class="a" id="t97" style="left:530.00px;top:627.90px;font-size:13.00px;color:#333;font-weight:400;font-style:normal;transform:scaleX(0.9716);transform-origin:0 0;">Chiếc</div>
<div class="a" id="t98" style="left:642.50px;width:140px;text-align:center;top:627.90px;font-size:13.00px;color:#333;font-weight:400;font-style:normal;transform:scaleX(1.0484);transform-origin:50% 0;">13/05/2019</div>
<div class="a" id="t99" style="left:828.00px;width:100px;text-align:right;top:627.90px;font-size:13.00px;color:#333;font-weight:400;font-style:normal;transform:scaleX(0.9632);transform-origin:100% 0;">1,00</div>
<div class="a" id="t100" style="left:948.00px;width:100px;text-align:right;top:627.90px;font-size:13.00px;color:#333;font-weight:400;font-style:normal;transform:scaleX(1.0178);transform-origin:100% 0;">4.545.455</div>
<div class="a" id="t101" style="left:1098.00px;width:100px;text-align:right;top:627.90px;font-size:13.00px;color:#333;font-weight:400;font-style:normal;transform:scaleX(1.0051);transform-origin:100% 0;">24</div>
<div class="a" id="t102" style="left:1218.00px;width:100px;text-align:right;top:627.90px;font-size:13.00px;color:#333;font-weight:400;font-style:normal;transform:scaleX(1.0227);transform-origin:100% 0;">189.394</div>
<div class="a" id="t103" style="left:329.97px;top:619.40px;font-size:13.00px;color:#333;font-weight:400;font-style:normal;transform:scaleX(1.0282);transform-origin:0 0;">Máy điều hòa KK 2 chiều</div>
<div class="a" id="t104" style="left:330.02px;top:637.20px;font-size:13.00px;color:#333;font-weight:400;font-style:normal;transform:scaleX(0.9825);transform-origin:0 0;">1.5HP 1C</div>
<div class="n" style="left:199px;top:655px;width:1417px;height:1px;background:#d6d6d6"></div>
<div class="a" id="t105" style="left:210.00px;top:677.40px;font-size:13.00px;color:#333;font-weight:400;font-style:normal;transform:scaleX(0.9356);transform-origin:0 0;">CCDC008</div>
<div class="a" id="t106" style="left:530.00px;top:677.40px;font-size:13.00px;color:#333;font-weight:400;font-style:normal;transform:scaleX(0.9716);transform-origin:0 0;">Chiếc</div>
<div class="a" id="t107" style="left:642.51px;width:140px;text-align:center;top:677.40px;font-size:13.00px;color:#333;font-weight:400;font-style:normal;transform:scaleX(1.0457);transform-origin:50% 0;">06/10/2019</div>
<div class="a" id="t108" style="left:828.00px;width:100px;text-align:right;top:677.40px;font-size:13.00px;color:#333;font-weight:400;font-style:normal;transform:scaleX(0.9632);transform-origin:100% 0;">1,00</div>
<div class="a" id="t109" style="left:948.00px;width:100px;text-align:right;top:677.40px;font-size:13.00px;color:#333;font-weight:400;font-style:normal;transform:scaleX(1.0351);transform-origin:100% 0;">2.245.455</div>
<div class="a" id="t110" style="left:1098.00px;width:100px;text-align:right;top:677.40px;font-size:13.00px;color:#333;font-weight:400;font-style:normal;transform:scaleX(0.9286);transform-origin:100% 0;">18</div>
<div class="a" id="t111" style="left:1218.00px;width:100px;text-align:right;top:677.40px;font-size:13.00px;color:#333;font-weight:400;font-style:normal;transform:scaleX(1.0227);transform-origin:100% 0;">124.748</div>
<div class="a" id="t112" style="left:330.00px;top:658.50px;font-size:13.00px;color:#333;font-weight:400;font-style:normal;transform:scaleX(1.0024);transform-origin:0 0;">Tủ sắt</div>
<div class="a" id="t113" style="left:330.00px;top:676.90px;font-size:13.00px;color:#333;font-weight:400;font-style:normal;transform:scaleX(1.0754);transform-origin:0 0;">0.457m*0.915m*1.83m 6</div>
<div class="a" id="t114" style="left:329.94px;top:694.10px;font-size:13.00px;color:#333;font-weight:400;font-style:normal;transform:scaleX(1.0702);transform-origin:0 0;">ngăn</div>
<div class="n" style="left:199px;top:710px;width:1417px;height:1px;background:#d6d6d6"></div>
<div class="a" id="t115" style="left:210.00px;top:726.90px;font-size:13.00px;color:#333;font-weight:400;font-style:normal;transform:scaleX(0.9356);transform-origin:0 0;">CCDC009</div>
<div class="a" id="t116" style="left:530.00px;top:726.90px;font-size:13.00px;color:#333;font-weight:400;font-style:normal;transform:scaleX(0.9716);transform-origin:0 0;">Chiếc</div>
<div class="a" id="t117" style="left:643.99px;width:140px;text-align:center;top:726.90px;font-size:13.00px;color:#333;font-weight:400;font-style:normal;transform:scaleX(1.0638);transform-origin:50% 0;">12/11/2014</div>
<div class="a" id="t118" style="left:828.00px;width:100px;text-align:right;top:726.90px;font-size:13.00px;color:#333;font-weight:400;font-style:normal;transform:scaleX(0.9632);transform-origin:100% 0;">1,00</div>
<div class="a" id="t119" style="left:948.00px;width:100px;text-align:right;top:726.90px;font-size:13.00px;color:#333;font-weight:400;font-style:normal;transform:scaleX(1.0351);transform-origin:100% 0;">2.090.000</div>
<div class="a" id="t120" style="left:1098.00px;width:100px;text-align:right;top:726.90px;font-size:13.00px;color:#333;font-weight:400;font-style:normal;transform:scaleX(1.0051);transform-origin:100% 0;">24</div>
<div class="a" id="t121" style="left:1218.00px;width:100px;text-align:right;top:726.90px;font-size:13.00px;color:#333;font-weight:400;font-style:normal;transform:scaleX(1.0269);transform-origin:100% 0;">87.083</div>
<div class="a" id="t122" style="left:329.96px;top:718.40px;font-size:13.00px;color:#333;font-weight:400;font-style:normal;transform:scaleX(1.0370);transform-origin:0 0;">Màn hình máy tính LED</div>
<div class="a" id="t123" style="left:328.99px;top:736.20px;font-size:13.00px;color:#333;font-weight:400;font-style:normal;transform:scaleX(1.0173);transform-origin:0 0;">S19B310B Samsung</div>
<div class="n" style="left:199px;top:754px;width:1417px;height:1px;background:#d6d6d6"></div>
<div class="a" id="t124" style="left:210.00px;top:770.90px;font-size:13.00px;color:#333;font-weight:400;font-style:normal;transform:scaleX(0.9356);transform-origin:0 0;">CCDC010</div>
<div class="a" id="t125" style="left:530.00px;top:770.90px;font-size:13.00px;color:#333;font-weight:400;font-style:normal;transform:scaleX(0.9716);transform-origin:0 0;">Chiếc</div>
<div class="a" id="t126" style="left:643.99px;width:140px;text-align:center;top:770.90px;font-size:13.00px;color:#333;font-weight:400;font-style:normal;transform:scaleX(1.0638);transform-origin:50% 0;">12/11/2014</div>
<div class="a" id="t127" style="left:828.00px;width:100px;text-align:right;top:770.90px;font-size:13.00px;color:#333;font-weight:400;font-style:normal;transform:scaleX(0.9632);transform-origin:100% 0;">1,00</div>
<div class="a" id="t128" style="left:948.00px;width:100px;text-align:right;top:770.90px;font-size:13.00px;color:#333;font-weight:400;font-style:normal;transform:scaleX(1.0351);transform-origin:100% 0;">6.090.000</div>
<div class="a" id="t129" style="left:1098.00px;width:100px;text-align:right;top:770.90px;font-size:13.00px;color:#333;font-weight:400;font-style:normal;transform:scaleX(1.0051);transform-origin:100% 0;">24</div>
<div class="a" id="t130" style="left:1218.00px;width:100px;text-align:right;top:770.90px;font-size:13.00px;color:#333;font-weight:400;font-style:normal;transform:scaleX(1.0213);transform-origin:100% 0;">253.750</div>
<div class="a" id="t131" style="left:329.00px;top:762.40px;font-size:13.00px;color:#333;font-weight:400;font-style:normal;transform:scaleX(1.0193);transform-origin:0 0;">CPU máy vi tính H61NHB</div>
<div class="a" id="t132" style="left:330.00px;top:780.20px;font-size:13.00px;color:#333;font-weight:400;font-style:normal;transform:scaleX(1.0290);transform-origin:0 0;">2.7Ghz intel</div>
<div class="n" style="left:318px;top:337px;width:0;height:455px;border-left:1px dotted #c8c8c8"></div>
<div class="n" style="left:518px;top:337px;width:0;height:455px;border-left:1px dotted #c8c8c8"></div>
<div class="n" style="left:638px;top:337px;width:0;height:455px;border-left:1px dotted #c8c8c8"></div>
<div class="n" style="left:788px;top:337px;width:0;height:455px;border-left:1px dotted #c8c8c8"></div>
<div class="n" style="left:938px;top:337px;width:0;height:455px;border-left:1px dotted #c8c8c8"></div>
<div class="n" style="left:1058px;top:337px;width:0;height:455px;border-left:1px dotted #c8c8c8"></div>
<div class="n" style="left:1208px;top:337px;width:0;height:455px;border-left:1px dotted #c8c8c8"></div>
<div class="n" style="left:1328px;top:337px;width:0;height:455px;border-left:1px dotted #c8c8c8"></div>
<div class="n" style="left:1478px;top:337px;width:0;height:455px;border-left:1px dotted #c8c8c8"></div>
<div class="n" style="left:1598px;top:337px;width:0;height:455px;border-left:1px dotted #c8c8c8"></div>
<div class="n" style="left:199px;top:792px;width:1417px;height:34px;background:#e8e9ec;border-top:1px solid #c9cacc"></div>
<div class="a" id="t133" style="left:209.00px;top:803.84px;font-size:12.00px;color:#222;font-weight:700;font-style:normal;transform:scaleX(0.9874);transform-origin:0 0;">Tổng cộng</div>
<div class="a" id="t134" style="left:818.00px;width:110px;text-align:right;top:803.84px;font-size:12.00px;color:#222;font-weight:700;font-style:normal;transform:scaleX(1.0011);transform-origin:100% 0;">34,00</div>
<div class="a" id="t135" style="left:938.00px;width:110px;text-align:right;top:803.84px;font-size:12.00px;color:#222;font-weight:700;font-style:normal;transform:scaleX(1.0316);transform-origin:100% 0;">128.332.535</div>
<div class="a" id="t136" style="left:1088.00px;width:110px;text-align:right;top:803.84px;font-size:12.00px;color:#222;font-weight:700;font-style:normal;">315</div>
<div class="a" id="t137" style="left:1208.00px;width:110px;text-align:right;top:803.84px;font-size:12.00px;color:#222;font-weight:700;font-style:normal;transform:scaleX(1.0173);transform-origin:100% 0;">10.521.245</div>
<div class="n" style="left:199px;top:826px;width:1417px;height:56px;background:#fff"></div>
<div class="a" id="t138" style="left:219.00px;top:848.00px;font-size:13.00px;color:#555;font-weight:400;font-style:normal;transform:scaleX(1.0269);transform-origin:0 0;">Tổng số: <b style="color:#222;font-weight:700">20</b> bản ghi</div>
<div class="n" style="left:1234px;top:838px;width:199px;height:32px;border:1px solid #cccccc;border-radius:2px;background:#fff"></div>
<div class="a" id="t139" style="left:1245.00px;top:848.20px;font-size:13.00px;color:#333;font-weight:400;font-style:normal;transform:scaleX(1.0754);transform-origin:0 0;">20 bản ghi trên 1 trang</div>
<svg style="left:1412px;top:852px" width="10" height="6"><polygon points="0,0 10,0 5,5.5" fill="#333"/></svg>
<div class="a" id="t140" style="left:1451.00px;top:848.20px;font-size:13.00px;color:#999;font-weight:400;font-style:normal;transform:scaleX(0.9331);transform-origin:0 0;">Trước</div>
<div class="n" style="left:1498px;top:844px;width:23px;height:20px;border:1px solid #dddddd"></div>
<div class="a" id="t141" style="left:1498.93px;width:20px;text-align:center;top:848.20px;font-size:13.00px;color:#222;font-weight:700;font-style:normal;transform:scaleX(0.8571);transform-origin:50% 0;">1</div>
<div class="a" id="t142" style="left:1532.00px;top:848.20px;font-size:13.00px;color:#999;font-weight:400;font-style:normal;">Sau</div>
<div class="n" style="left:0;top:0;width:1647px;height:893px;border:1px solid #bbbbbb;z-index:100"></div>
</body></html>
